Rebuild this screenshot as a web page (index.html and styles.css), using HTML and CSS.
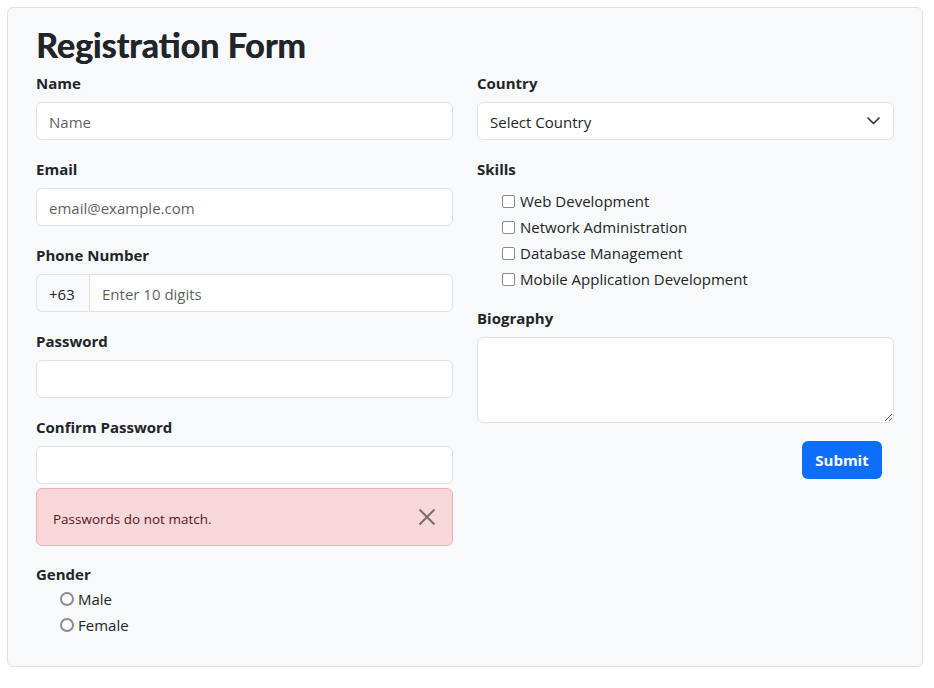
FILE: index.html
```html
<!DOCTYPE html>
<html lang="en">
<head>
<meta charset="utf-8">
<title>Registration Form</title>
<link rel="stylesheet" href="styles.css">
</head>
<body>
<div class="card">
  <h1 class="title">Registration Form</h1>
  <div class="cols">
    <div class="col">
      <div class="field">
        <label class="label">Name</label>
        <input class="control" type="text" placeholder="Name">
      </div>
      <div class="field">
        <label class="label">Email</label>
        <input class="control" type="email" placeholder="email@example.com">
      </div>
      <div class="field">
        <label class="label">Phone Number</label>
        <div class="input-group">
          <span class="addon">+63</span>
          <input class="control grouped" type="text" placeholder="Enter 10 digits">
        </div>
      </div>
      <div class="field">
        <label class="label">Password</label>
        <input class="control" type="password">
      </div>
      <div class="field tight">
        <label class="label">Confirm Password</label>
        <input class="control" type="password">
      </div>
      <div class="alert">
        <span class="alert-text">Passwords do not match.</span>
        <svg class="close" width="18" height="18" viewBox="0 0 18 18"><path d="M1.5 1.5 16.5 16.5M16.5 1.5 1.5 16.5" stroke="#7a6e70" stroke-width="2" fill="none"/></svg>
      </div>
      <div class="field last">
        <label class="label flush">Gender</label>
        <div class="options radios">
          <label class="option"><input class="radio" type="radio" name="g"><span>Male</span></label>
          <label class="option"><input class="radio" type="radio" name="g"><span>Female</span></label>
        </div>
      </div>
    </div>
    <div class="col">
      <div class="field">
        <label class="label">Country</label>
        <div class="select-wrap">
          <select class="control select">
            <option>Select Country</option>
          </select>
          <svg class="chevron" width="13" height="8" viewBox="0 0 13 8"><path d="M1 1 6.5 6.5 12 1" stroke="#343a40" stroke-width="1.7" fill="none" stroke-linecap="round" stroke-linejoin="round"/></svg>
        </div>
      </div>
      <div class="field skills">
        <label class="label">Skills</label>
        <div class="options checks">
          <label class="option"><input class="check" type="checkbox"><span>Web Development</span></label>
          <label class="option"><input class="check" type="checkbox"><span>Network Administration</span></label>
          <label class="option"><input class="check" type="checkbox"><span>Database Management</span></label>
          <label class="option"><input class="check" type="checkbox"><span>Mobile Application Development</span></label>
        </div>
      </div>
      <div class="field">
        <label class="label">Biography</label>
        <textarea class="control area"></textarea>
      </div>
      <div class="actions">
        <button class="btn" type="button">Submit</button>
      </div>
    </div>
  </div>
</div>
</body>
</html>
```
FILE: styles.css
```css
body {
  margin: 7px;
  font-family: "Open Sans", "Noto Sans", sans-serif;
  color: #212529;
  background: #ffffff;
}

.card {
  width: 916px;
  box-sizing: border-box;
  border: 1px solid #dee2e6;
  border-radius: 6px;
  background: #f8f9fa;
  padding: 19px 28px 28px;
}

.title {
  margin: 0 0 1px;
  font-family: Lato, "Open Sans", sans-serif;
  font-size: 34px;
  line-height: 36px;
  height: 44px;
  font-weight: 700;
  text-shadow: 0.5px 0 0 #212529;
}

.cols {
  display: grid;
  grid-template-columns: 417px 417px;
  column-gap: 24px;
  align-items: start;
}

.field {
  margin-bottom: 18px;
}

.field.tight {
  margin-bottom: 4px;
}

.field.last {
  margin-bottom: 0;
}

.field.skills {
  margin-bottom: 15px;
}

.label {
  display: block;
  font-weight: 700;
  font-size: 15px;
  line-height: 22px;
  margin-bottom: 8px;
}

.label.flush {
  margin-top: 1px;
  margin-bottom: 1px;
}

.control {
  display: block;
  width: 100%;
  box-sizing: border-box;
  height: 38px;
  margin: 0;
  border: 1px solid #dee2e6;
  border-radius: 6px;
  background: #ffffff;
  padding: 2px 12px 0;
  font-family: inherit;
  font-size: 15px;
  color: #212529;
  outline: none;
}

.control::placeholder {
  color: rgba(33, 37, 41, 0.75);
}

.input-group {
  display: flex;
}

.addon {
  display: flex;
  align-items: center;
  box-sizing: border-box;
  width: 53px;
  height: 38px;
  padding: 2px 12px 0;
  border: 1px solid #dee2e6;
  border-right: 0;
  border-radius: 6px 0 0 6px;
  background: #f8f9fa;
  font-size: 15px;
}

.control.grouped {
  flex: 1;
  width: auto;
  border-radius: 0 6px 6px 0;
}

.select-wrap {
  position: relative;
}

.select {
  appearance: none;
  -webkit-appearance: none;
}

.chevron {
  position: absolute;
  right: 14px;
  top: 15px;
  pointer-events: none;
}

.area {
  height: 86px;
  padding: 6px 12px;
  resize: vertical;
}

.alert {
  box-sizing: border-box;
  height: 58px;
  margin-bottom: 17px;
  padding: 0 16px 0 16px;
  display: flex;
  align-items: center;
  justify-content: space-between;
  background: #f8d7da;
  border: 1px solid #f1aeb5;
  border-radius: 6px;
  color: #58151c;
  font-size: 13.5px;
}

.alert-text {
  padding-top: 4px;
}

.options {
  display: flex;
  flex-direction: column;
}

.radios {
  padding-left: 24px;
}

.checks {
  padding-left: 25px;
  margin-top: 2px;
}

.option {
  display: flex;
  align-items: center;
  height: 26px;
  font-size: 15px;
}

.option input {
  appearance: none;
  -webkit-appearance: none;
  box-sizing: border-box;
  width: 13px;
  height: 13px;
  margin: 0 5px 0 0;
  border: 1.6px solid #8b8b95;
  background: #ffffff;
}

.option input.check {
  border-radius: 2px;
}

.option input.radio {
  width: 14px;
  height: 14px;
  border-radius: 50%;
  border-width: 2px;
  margin-right: 4px;
}

.actions {
  display: flex;
  justify-content: flex-end;
  padding-right: 12px;
  margin-top: 14px;
}

.btn {
  width: 80px;
  height: 38px;
  border: 0;
  border-radius: 6px;
  background: #0d6efd;
  color: #ffffff;
  font-family: inherit;
  font-size: 15px;
  font-weight: 700;
}
```
